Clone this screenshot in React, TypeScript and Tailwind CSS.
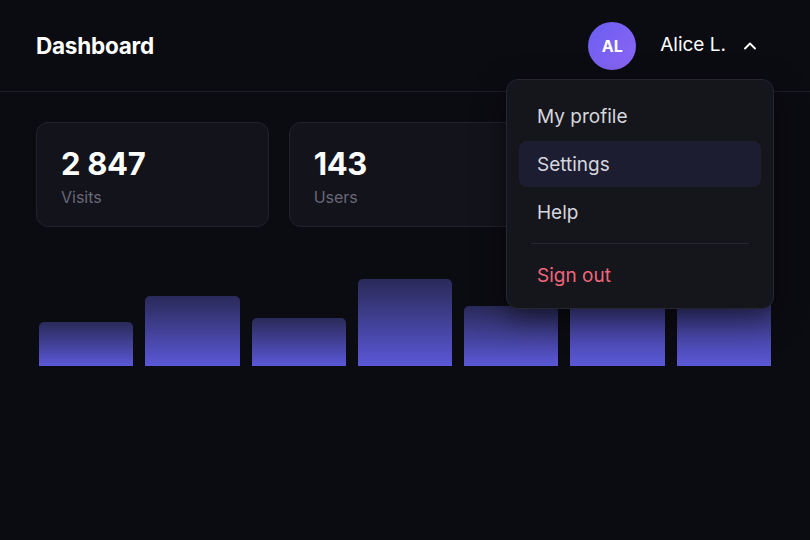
import { ChevronUp } from 'lucide-react';

const stats = [
  { value: '2 847', label: 'Visits' },
  { value: '143', label: 'Users' },
];

// daily bar heights in px
const bars = [44, 70, 48, 87, 60, 92, 80];

const menu = ['My profile', 'Settings', 'Help'];

export default function App() {
  return (
    <div
      className="min-h-[540px] w-full bg-[#0b0b12] text-white"
      style={{ fontFamily: 'Inter, "Noto Sans", sans-serif' }}
    >
      {/* Top bar */}
      <header className="relative flex h-[92px] items-center justify-between border-b border-[#1c1c26] px-9">
        <h1 className="text-[22.5px] font-bold tracking-[-0.01em]">Dashboard</h1>

        <div className="flex items-center gap-6">
          <div className="flex h-12 w-12 items-center justify-center rounded-full bg-linear-to-br from-[#6a5df0] to-[#8c66f5] text-[16px] font-bold">
            AL
          </div>
          <button className="mr-[14px] flex items-center gap-[14px] text-[19px] text-white">
            Alice L.
            <ChevronUp size={20} strokeWidth={2.25} />
          </button>
        </div>

        {/* Account menu */}
        <div className="absolute right-9 top-[79px] z-10 w-[268px] rounded-xl border border-[#262630] bg-[#15151c] px-3 pb-[10px] pt-[13px] shadow-[0_10px_30px_rgba(0,0,0,0.5)]">
          <ul className="flex flex-col gap-0.5">
            {menu.map((item) => (
              <li
                key={item}
                className={`flex h-[46px] items-center rounded-lg px-[18px] pt-[3px] text-[19px] text-[#d6d6de] ${
                  item === 'Settings' ? 'bg-[#1c1d31]' : ''
                }`}
              >
                {item}
              </li>
            ))}
          </ul>
          <div className="mx-3 my-2 h-px bg-[#272731]" />
          <div className="flex h-[46px] items-center px-[18px] pt-[2px] text-[19px] text-[#f0667a]">
            Sign out
          </div>
        </div>
      </header>

      <main className="px-9 pt-[30px]">
        {/* Stat cards; the third sits under the open menu */}
        <div className="grid grid-cols-3 gap-5">
          {stats.map((s) => (
            <div
              key={s.label}
              className="h-[105px] rounded-xl border border-[#22222c] bg-[#13131b] px-6 pt-[23px]"
            >
              <div className="text-[31px] font-bold leading-9 tracking-[-0.01em]">{s.value}</div>
              <div className="mt-[3px] text-base text-[#686878]">{s.label}</div>
            </div>
          ))}
          <div className="h-[105px] rounded-xl border border-[#22222c] bg-[#13131b]" />
        </div>

        {/* Weekly chart */}
        <div className="mt-5 flex h-[119px] items-end gap-3 px-[3px]">
          {bars.map((h, i) => (
            <div
              key={i}
              className="flex-1 rounded-t-[5px] bg-linear-to-t from-[#5b58d8] to-[#2a2a5a]"
              style={{ height: h }}
            />
          ))}
        </div>
      </main>
    </div>
  );
}
